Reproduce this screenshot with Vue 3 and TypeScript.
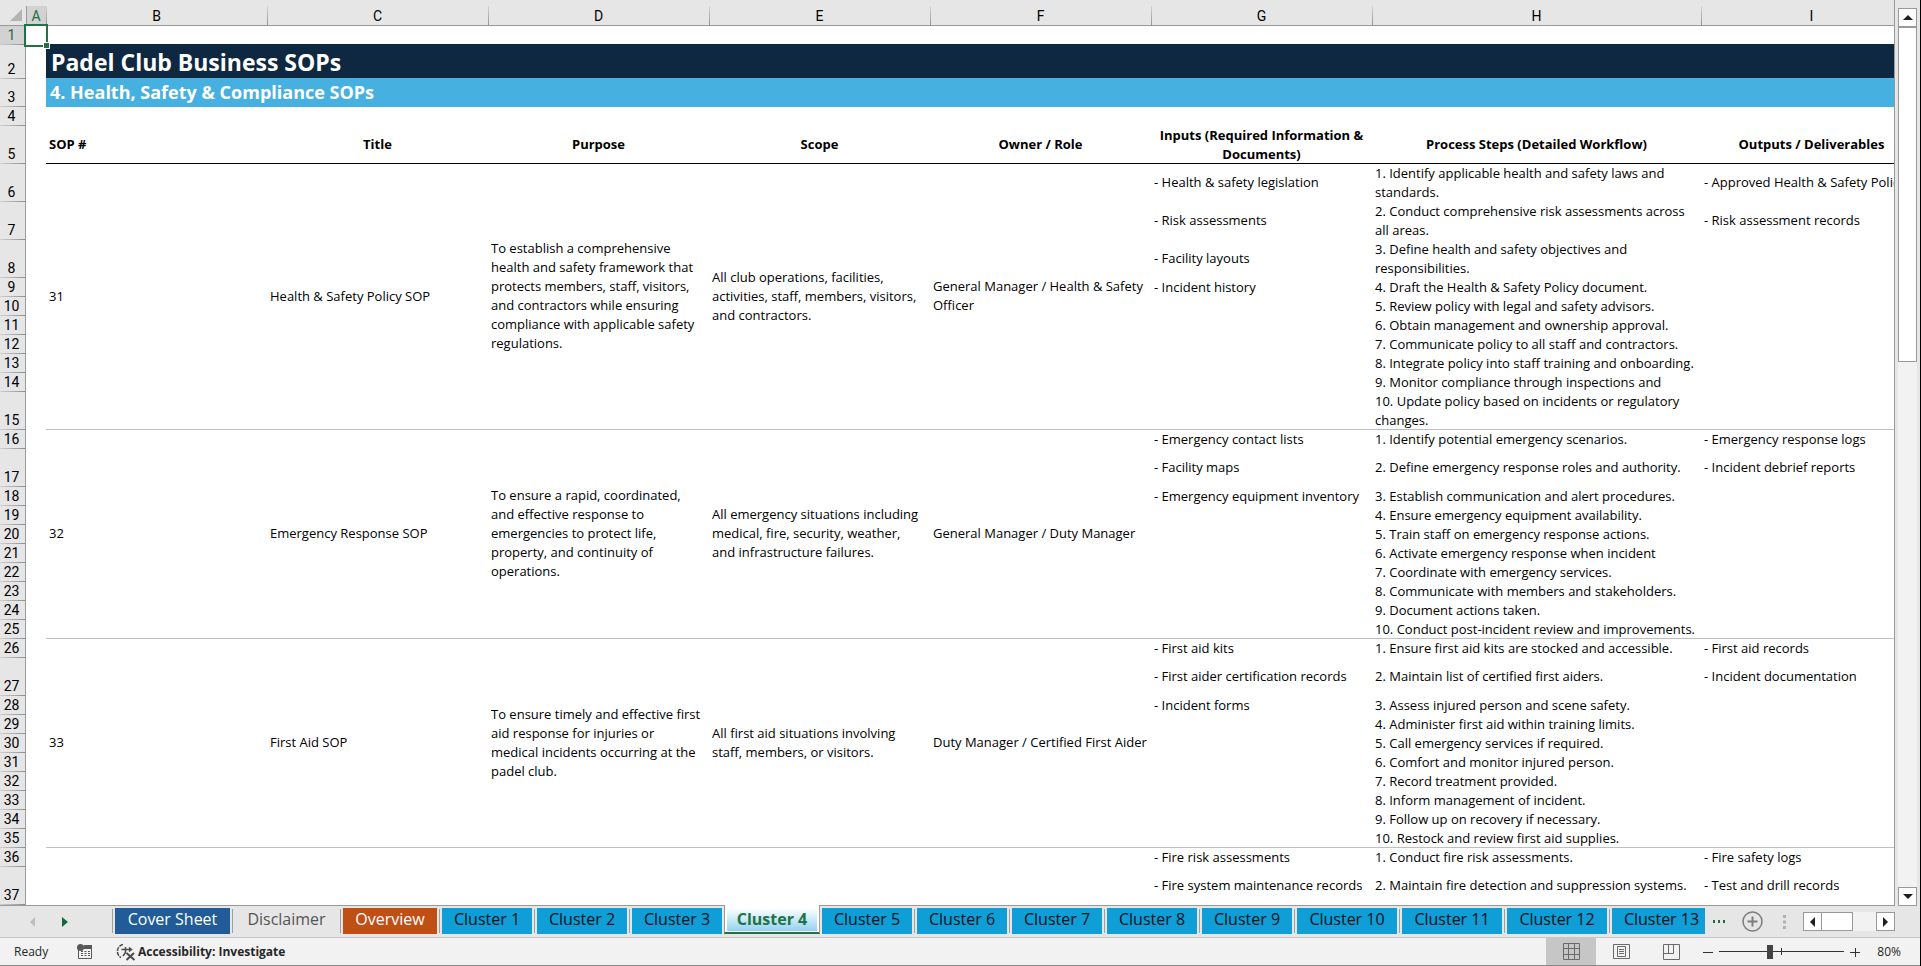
<script setup lang="ts">
import { ref } from 'vue'

interface SheetRow {
  num: number
  tall?: boolean
  input?: string
  step: string
  output?: string
}

interface Sop {
  id: string
  title: string
  purpose: string
  scope: string
  owner: string
  rows: SheetRow[]
}

interface Tab {
  name: string
  size: string
  tone: string
}

const columns = ['A', 'B', 'C', 'D', 'E', 'F', 'G', 'H', 'I']

const headings = [
  'Title',
  'Purpose',
  'Scope',
  'Owner / Role',
  'Inputs (Required Information &\nDocuments)',
  'Process Steps (Detailed Workflow)',
  'Outputs / Deliverables',
]

const sops: Sop[] = [
  {
    id: '31',
    title: 'Health & Safety Policy SOP',
    purpose:
      'To establish a comprehensive\nhealth and safety framework that\nprotects members, staff, visitors,\nand contractors while ensuring\ncompliance with applicable safety\nregulations.',
    scope: 'All club operations, facilities,\nactivities, staff, members, visitors,\nand contractors.',
    owner: 'General Manager / Health & Safety\nOfficer',
    rows: [
      { num: 6, tall: true, input: '- Health & safety legislation', step: '1. Identify applicable health and safety laws and\nstandards.', output: '- Approved Health & Safety Policy' },
      { num: 7, tall: true, input: '- Risk assessments', step: '2. Conduct comprehensive risk assessments across\nall areas.', output: '- Risk assessment records' },
      { num: 8, tall: true, input: '- Facility layouts', step: '3. Define health and safety objectives and\nresponsibilities.' },
      { num: 9, input: '- Incident history', step: '4. Draft the Health & Safety Policy document.' },
      { num: 10, step: '5. Review policy with legal and safety advisors.' },
      { num: 11, step: '6. Obtain management and ownership approval.' },
      { num: 12, step: '7. Communicate policy to all staff and contractors.' },
      { num: 13, step: '8. Integrate policy into staff training and onboarding.' },
      { num: 14, step: '9. Monitor compliance through inspections and' },
      { num: 15, tall: true, step: '10. Update policy based on incidents or regulatory\nchanges.' },
    ],
  },
  {
    id: '32',
    title: 'Emergency Response SOP',
    purpose:
      'To ensure a rapid, coordinated,\nand effective response to\nemergencies to protect life,\nproperty, and continuity of\noperations.',
    scope: 'All emergency situations including\nmedical, fire, security, weather,\nand infrastructure failures.',
    owner: 'General Manager / Duty Manager',
    rows: [
      { num: 16, input: '- Emergency contact lists', step: '1. Identify potential emergency scenarios.', output: '- Emergency response logs' },
      { num: 17, tall: true, input: '- Facility maps', step: '2. Define emergency response roles and authority.', output: '- Incident debrief reports' },
      { num: 18, input: '- Emergency equipment inventory', step: '3. Establish communication and alert procedures.' },
      { num: 19, step: '4. Ensure emergency equipment availability.' },
      { num: 20, step: '5. Train staff on emergency response actions.' },
      { num: 21, step: '6. Activate emergency response when incident' },
      { num: 22, step: '7. Coordinate with emergency services.' },
      { num: 23, step: '8. Communicate with members and stakeholders.' },
      { num: 24, step: '9. Document actions taken.' },
      { num: 25, step: '10. Conduct post-incident review and improvements.' },
    ],
  },
  {
    id: '33',
    title: 'First Aid SOP',
    purpose:
      'To ensure timely and effective first\naid response for injuries or\nmedical incidents occurring at the\npadel club.',
    scope: 'All first aid situations involving\nstaff, members, or visitors.',
    owner: 'Duty Manager / Certified First Aider',
    rows: [
      { num: 26, input: '- First aid kits', step: '1. Ensure first aid kits are stocked and accessible.', output: '- First aid records' },
      { num: 27, tall: true, input: '- First aider certification records', step: '2. Maintain list of certified first aiders.', output: '- Incident documentation' },
      { num: 28, input: '- Incident forms', step: '3. Assess injured person and scene safety.' },
      { num: 29, step: '4. Administer first aid within training limits.' },
      { num: 30, step: '5. Call emergency services if required.' },
      { num: 31, step: '6. Comfort and monitor injured person.' },
      { num: 32, step: '7. Record treatment provided.' },
      { num: 33, step: '8. Inform management of incident.' },
      { num: 34, step: '9. Follow up on recovery if necessary.' },
      { num: 35, step: '10. Restock and review first aid supplies.' },
    ],
  },
]

const trailing: SheetRow[] = [
  { num: 36, input: '- Fire risk assessments', step: '1. Conduct fire risk assessments.', output: '- Fire safety logs' },
  { num: 37, tall: true, input: '- Fire system maintenance records', step: '2. Maintain fire detection and suppression systems.', output: '- Test and drill records' },
]

const tabs: Tab[] = [
  { name: 'Cover Sheet', size: 'w-cover', tone: 'navy' },
  { name: 'Disclaimer', size: 'w-disclaimer', tone: 'plain' },
  { name: 'Overview', size: 'w-overview', tone: 'orange' },
  ...Array.from({ length: 13 }, (_, i) => ({
    name: `Cluster ${i + 1}`,
    size: i < 9 ? 'w-short' : 'w-long',
    tone: 'sky',
  })),
]

const active = ref('Cluster 4')
const zoom = ref(40)

// A single line in a double-height row sits slightly above the middle.
const isRaised = (r: SheetRow, text?: string) => !!r.tall && !text?.includes('\n')
</script>

<template>
  <div class="app">
    <main class="work">
      <div class="sheet">
        <table class="grid">
          <colgroup>
            <col class="c-num" />
            <col class="c-a" />
            <col v-for="n in 6" :key="n" class="c-std" />
            <col class="c-steps" />
            <col class="c-std" />
          </colgroup>
          <thead>
            <tr class="letters">
              <th class="corner">
                <button type="button" aria-label="Select all">
                  <svg width="13" height="13" viewBox="0 0 13 13"><path d="M12 0V12H0Z" fill="#b4b4b4" /></svg>
                </button>
              </th>
              <th v-for="c in columns" :key="c" scope="col" :class="{ picked: c === 'A' }">{{ c }}</th>
            </tr>
          </thead>
          <tbody>
            <tr class="h-line">
              <th scope="row" class="num picked">1</th>
              <td class="cursor"><i class="frame"></i><i class="handle"></i></td>
              <td colspan="8"></td>
            </tr>
            <tr class="h-title">
              <th scope="row" class="num">2</th>
              <td></td>
              <td colspan="8" class="title">Padel Club Business SOPs</td>
            </tr>
            <tr class="h-sub">
              <th scope="row" class="num">3</th>
              <td></td>
              <td colspan="8" class="sub">4. Health, Safety &amp; Compliance SOPs</td>
            </tr>
            <tr class="h-line">
              <th scope="row" class="num">4</th>
              <td></td>
              <td colspan="8"></td>
            </tr>
            <tr class="h-double head">
              <th scope="row" class="num">5</th>
              <td></td>
              <td class="first raised">SOP #</td>
              <td v-for="h in headings" :key="h" :class="{ raised: !h.includes('\n') }">{{ h }}</td>
            </tr>
            <template v-for="s in sops" :key="s.id">
              <tr
                v-for="(r, i) in s.rows"
                :key="r.num"
                :class="[r.tall ? 'h-double' : 'h-line', { last: i === s.rows.length - 1 }]"
              >
                <th scope="row" class="num">{{ r.num }}</th>
                <td></td>
                <template v-if="i === 0">
                  <td :rowspan="s.rows.length" class="merged">{{ s.id }}</td>
                  <td :rowspan="s.rows.length" class="merged">{{ s.title }}</td>
                  <td :rowspan="s.rows.length" class="merged">{{ s.purpose }}</td>
                  <td :rowspan="s.rows.length" class="merged">{{ s.scope }}</td>
                  <td :rowspan="s.rows.length" class="merged">{{ s.owner }}</td>
                </template>
                <td class="item" :class="{ raised: isRaised(r, r.input) }">{{ r.input }}</td>
                <td class="item" :class="{ raised: isRaised(r, r.step) }">{{ r.step }}</td>
                <td class="item" :class="{ raised: isRaised(r, r.output) }">{{ r.output }}</td>
              </tr>
            </template>
            <tr v-for="r in trailing" :key="r.num" :class="r.tall ? 'h-double' : 'h-line'">
              <th scope="row" class="num">{{ r.num }}</th>
              <td colspan="6"></td>
              <td :class="{ raised: r.tall }">{{ r.input }}</td>
              <td :class="{ raised: r.tall }">{{ r.step }}</td>
              <td :class="{ raised: r.tall }">{{ r.output }}</td>
            </tr>
            <tr class="h-line">
              <th class="num"></th>
              <td colspan="9"></td>
            </tr>
          </tbody>
        </table>
      </div>
      <div class="vbar">
        <button type="button" class="arrow" aria-label="Scroll up">
          <svg width="10" height="6" viewBox="0 0 10 6"><path d="M5 0L10 5H0Z" fill="#1f1f1f" /></svg>
        </button>
        <div class="vtrack"><div class="vthumb"></div></div>
        <button type="button" class="arrow" aria-label="Scroll down">
          <svg width="10" height="6" viewBox="0 0 10 6"><path d="M5 5L0 0H10Z" fill="#1f1f1f" /></svg>
        </button>
      </div>
    </main>

    <nav class="tabbar" aria-label="Sheets">
      <div class="steps">
        <button type="button" aria-label="Previous sheets">
          <svg width="6" height="10" viewBox="0 0 6 10"><path d="M5 0V10L0 5Z" fill="#bdbdbd" /></svg>
        </button>
        <button type="button" aria-label="Next sheets">
          <svg width="6" height="10" viewBox="0 0 6 10"><path d="M0 0L6 5L0 10Z" fill="#0e6b3a" /></svg>
        </button>
      </div>
      <div class="tabs">
        <div v-for="t in tabs" :key="t.name" class="slot" :class="{ on: t.name === active }">
          <button type="button" :class="[t.size, t.tone]" @click="active = t.name">{{ t.name }}</button>
        </div>
      </div>
      <div class="extras">
        <button type="button" class="more" aria-label="More sheets">
          <svg width="13" height="3" viewBox="0 0 13 3"><path d="M0 0h2v3H0zM5 0h2v3H5zM10 0h2v3h-2z" fill="#1e6b45" /></svg>
        </button>
        <button type="button" class="add" aria-label="New sheet">
          <svg width="21" height="21" viewBox="0 0 21 21" fill="none" stroke="#7d7d7d">
            <circle cx="10.500" cy="10.500" r="9.500" stroke-width="1.500" />
            <path d="M10.500 5.500v10M5.500 10.500h10" stroke-width="2" />
          </svg>
        </button>
        <svg class="grip" width="3" height="14" viewBox="0 0 3 14"><path d="M0 0h3v3H0zM0 5.500h3v3H0zM0 11h3v3H0z" fill="#b2b2b2" /></svg>
        <div class="hbar">
          <button type="button" class="arrow" aria-label="Scroll left">
            <svg width="6" height="10" viewBox="0 0 6 10"><path d="M5 0V10L0 5Z" fill="#1f1f1f" /></svg>
          </button>
          <div class="htrack"><div class="hthumb"></div></div>
          <button type="button" class="arrow" aria-label="Scroll right">
            <svg width="6" height="10" viewBox="0 0 6 10"><path d="M0 0L5 5L0 10Z" fill="#1f1f1f" /></svg>
          </button>
        </div>
      </div>
    </nav>

    <footer class="status">
      <span class="ready">Ready</span>
      <button type="button" class="macro" aria-label="Record macro">
        <svg width="16" height="16" viewBox="0 0 16 16">
          <path d="M7 1h8v4H6z" fill="#595959" />
          <path d="M1.500 6v8.500h13V4" fill="none" stroke="#595959" />
          <circle cx="3.500" cy="3.500" r="3.500" fill="#595959" />
          <path d="M4 7.500h2M7.500 7.500h2M11 7.500h2M4 9.500h2M7.500 9.500h2M11 9.500h2M4 11.500h2M7.500 11.500h2M11 11.500h2" stroke="#595959" />
        </svg>
      </button>
      <button type="button" class="access">
        <svg width="20" height="18" viewBox="0 0 20 18" fill="none" stroke="#4a4a4a">
          <path d="M7 1.500A7 7 0 0 0 5 14.500" stroke-width="1.500" stroke-dasharray="4 1" />
          <path d="M5.500 6.500h9M9.500 4v5.500L7 13M13 4.500l2.500 2l-2.500 2" stroke-width="1.500" />
          <path d="M10.500 10l8 7M18 10l-7.500 7" stroke-width="2" />
        </svg>
        <span>Accessibility: Investigate</span>
      </button>
      <div class="views">
        <button type="button" class="chosen" aria-label="Normal view">
          <svg width="17" height="17" viewBox="0 0 17 17" fill="none" stroke="#6a6a6a"><path d="M.5.500h16v16H.5zM5.500.500v16M11.500.500v16M.5 5.500h16M.5 11.500h16" /></svg>
        </button>
        <button type="button" aria-label="Page layout view">
          <svg width="17" height="16" viewBox="0 0 17 16" fill="none" stroke="#6a6a6a"><path d="M.5.500h16v14H.5zM4.500 2.500h8v10h-8zM6 5.500h5M6 7.500h5M6 9.500h5" /></svg>
        </button>
        <button type="button" aria-label="Page break preview">
          <svg width="17" height="16" viewBox="0 0 17 16" fill="none" stroke="#6a6a6a"><path d="M.5.500h16v15H.5zM.5 9.500h10v-9M5.500.500v9" /></svg>
        </button>
      </div>
      <div class="zoom">
        <button type="button" aria-label="Zoom out"><svg width="10" height="10" viewBox="0 0 10 10"><path d="M0 5.500h10" stroke="#333" /></svg></button>
        <input v-model="zoom" type="range" min="0" max="100" aria-label="Zoom" />
        <button type="button" aria-label="Zoom in"><svg width="10" height="10" viewBox="0 0 10 10"><path d="M0 5.500h10M5.500 1v9" stroke="#333" /></svg></button>
        <span class="percent">80%</span>
      </div>
    </footer>
  </div>
</template>

<style>
body {
  margin: 0;
  overflow: hidden;
}
</style>

<style scoped>
* {
  box-sizing: border-box;
}
.app {
  display: flex;
  flex-direction: column;
  height: 100vh;
  background: #e6e6e6;
  border-right: 1px solid #000;
  font-family: "Open Sans", "Noto Sans", sans-serif;
  font-size: 13px;
  color: #000;
}
button {
  margin: 0;
  padding: 0;
  border: 0;
  background: none;
  color: inherit;
  font: inherit;
  display: flex;
  align-items: center;
  justify-content: center;
}
svg {
  display: block;
  flex: none;
}

/* worksheet */
.work {
  flex: 1;
  min-height: 0;
  display: flex;
}
.sheet {
  flex: 1;
  min-width: 0;
  overflow: hidden;
  border-right: 1px solid #999;
  border-bottom: 1px solid #999;
  background: #fff;
}
.grid {
  table-layout: fixed;
  width: 1922px;
  min-width: 100%;
  border-collapse: separate;
  border-spacing: 0;
}
.c-num { width: 26px; }
.c-a { width: 20px; }
.c-std { width: 221px; }
.c-steps { width: 329px; }
.grid th,
.grid td {
  padding: 0 3px;
  line-height: 19px;
  text-align: left;
  vertical-align: middle;
  white-space: pre;
}
.grid .letters th {
  height: 26px;
  padding: 6px 0 0;
  border-bottom: 1px solid #999;
  background: linear-gradient(#d4d4d4, #8f8f8f) 0 6px / 1px 20px no-repeat #e6e6e6;
  font-family: Roboto, "Liberation Sans", sans-serif;
  font-size: 14px;
  font-weight: 400;
  line-height: 18px;
  text-align: center;
  vertical-align: bottom;
}
.grid .letters th.corner {
  background: #e6e6e6;
}
.corner button {
  margin: 0 3px 3px auto;
}
.grid .letters th.picked {
  background:
    linear-gradient(#999, #999) 0 6px / 1px 20px no-repeat,
    linear-gradient(#d2d2d2, #d2d2d2) 0 6px no-repeat #e6e6e6;
}
.grid .num {
  padding: 0 2px 1px 0;
  border-right: 1px solid #999;
  background: linear-gradient(90deg, #d0d0d0, #8f8f8f) 0 100% / 100% 1px no-repeat #e6e6e6;
  font-family: Roboto, "Liberation Sans", sans-serif;
  font-size: 14px;
  font-weight: 400;
  line-height: 18px;
  text-align: center;
  vertical-align: bottom;
}
.grid .num.picked {
  background-color: #d2d2d2;
}
.picked {
  color: #1f6b44;
}
.h-line { height: 19px; }
.h-title { height: 34px; }
.h-sub { height: 28px; }
.h-double { height: 38px; }
.grid .title {
  padding-left: 5px;
  background: #0f2841;
  box-shadow: 0 -1px #0f2841;
  color: #fff;
  font-size: 23px;
  font-weight: 700;
  line-height: 32px;
}
.grid .sub {
  padding: 0 0 2px 4px;
  background: #46b1e1;
  box-shadow: 0 -1px #46b1e1;
  color: #fff;
  font-size: 18px;
  font-weight: 700;
  line-height: 24px;
}
.head td {
  font-weight: 700;
}
.grid .head td:nth-child(n + 4) {
  text-align: center;
}
.head td:nth-child(n + 3) {
  box-shadow: inset 0 -1px #000;
}
.grid .merged,
.grid .raised {
  padding-bottom: 2px;
}
.merged,
.last .item {
  box-shadow: inset 0 -1px #bfbfbf;
}
.cursor {
  position: relative;
}
.frame {
  position: absolute;
  inset: -2px;
  border: 2px solid #217346;
}
.handle {
  position: absolute;
  right: -4px;
  bottom: -4px;
  width: 7px;
  height: 7px;
  border: 1px solid #fff;
  background: #217346;
  z-index: 1;
}

/* scroll bars */
.vbar {
  display: flex;
  flex-direction: column;
  width: 19px;
  margin: 8px 3px 0 3px;
}
.arrow {
  flex: none;
  width: 19px;
  height: 19px;
  border: 1px solid #999;
  background: #fff;
}
.vtrack {
  flex: 1;
  background: #f2f2f2;
}
.vthumb {
  height: 39%;
  border: 1px solid #999;
  background: #fff;
}
.hbar {
  display: flex;
}
.htrack {
  width: 54px;
  background: #f2f2f2;
}
.hthumb {
  width: 31px;
  height: 19px;
  border: 1px solid #999;
  border-left: 0;
  background: #fff;
}

/* sheet tabs */
.tabbar {
  display: flex;
  height: 32px;
  border-bottom: 1px solid #c6c6c6;
  font-size: 16px;
}
.steps {
  display: flex;
  align-items: center;
  gap: 26px;
  width: 112px;
  padding-left: 30px;
}
.tabs {
  display: flex;
  align-items: flex-start;
}
.slot {
  padding: 2px 2px 3px 3px;
  background: linear-gradient(#a0a0a0, #a0a0a0) 0 3px / 1px 24px no-repeat;
}
.slot button {
  height: 26px;
  padding-bottom: 4px;
  color: #06121c;
}
.slot:last-child {
  padding-right: 0;
}
.slot .w-cover { width: 115px; }
.slot .w-disclaimer { width: 103px; }
.slot .w-overview { width: 94px; }
.slot .w-short { width: 90px; }
.slot .w-long { width: 100px; }
.slot:last-child .w-long {
  width: 93px;
  padding-left: 6px;
}
.slot .navy { background: #215c98; color: #fff; }
.slot .plain { color: #555; }
.slot .orange { background: #c04f15; color: #fff; }
.slot .sky { background: #0f9ed5; }
.slot.on {
  margin: -1px -1px 0 0;
  padding: 3px 2px 0;
  border: 1px solid #999;
  border-width: 0 1px 2px;
  border-bottom-color: #217346;
  background: #fff;
}
.slot.on button {
  height: 24px;
  padding-bottom: 2px;
  background: linear-gradient(#fff, #93d3ee) 0 0 / 100% 23px no-repeat #fff;
  color: #217346;
  font-weight: 700;
}
.extras {
  display: flex;
  align-items: center;
  margin-left: auto;
  padding-right: 25px;
}
.more { margin-right: 16px; }
.add { margin-right: 20px; }
.grip { margin-right: 17px; }

/* status bar */
.status {
  display: flex;
  align-items: center;
  height: 28px;
  padding-right: 19px;
  border-bottom: 1px solid #8a8a8a;
  background: #f2f2f2;
  color: #262626;
  font-size: 12px;
}
.ready {
  width: 63px;
  padding-left: 14px;
}
.macro {
  margin: 0 23px 0 14px;
}
.access {
  gap: 2px;
  font-weight: 700;
}
.views {
  display: flex;
  align-self: stretch;
  margin-left: auto;
}
.views button {
  width: 50px;
}
.views .chosen {
  background: #c6c6c6;
}
.zoom {
  display: flex;
  align-items: center;
  margin-left: 7px;
}
.zoom input {
  appearance: none;
  width: 125px;
  height: 15px;
  margin: 0 6px;
  background:
    linear-gradient(#333, #333) 0 7px / 100% 1px no-repeat,
    linear-gradient(#333, #333) 50% 4px / 1px 7px no-repeat;
}
.zoom input::-webkit-slider-thumb {
  appearance: none;
  width: 6px;
  height: 14px;
  background: #444;
}
.percent {
  width: 41px;
  text-align: right;
}
</style>
